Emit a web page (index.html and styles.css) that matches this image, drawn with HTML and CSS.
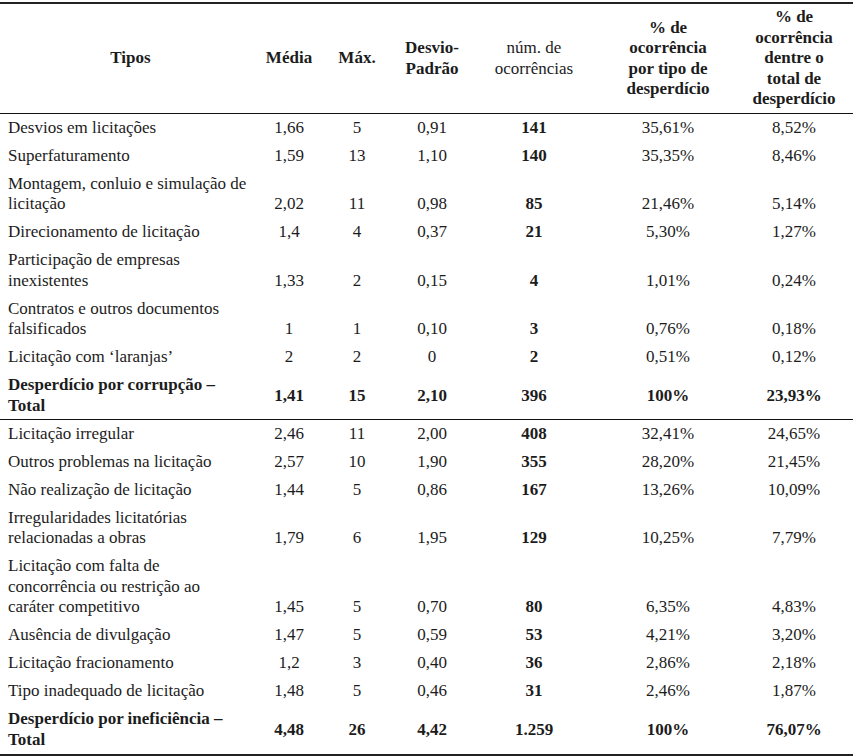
FILE: index.html
```html
<!DOCTYPE html>
<html lang="pt">
<head>
<meta charset="utf-8">
<title>Tipos de desperdício</title>
<link rel="stylesheet" href="styles.css">
</head>
<body>
<table class="tbl">
  <colgroup>
    <col class="c1"><col class="c2"><col class="c3"><col class="c4"><col class="c5"><col class="c6"><col class="c7">
  </colgroup>
  <thead>
    <tr>
      <th>Tipos</th>
      <th>Média</th>
      <th>Máx.</th>
      <th>Desvio-<br>Padrão</th>
      <th class="light">núm. de<br>ocorrências</th>
      <th>% de<br>ocorrência<br>por tipo de<br>desperdício</th>
      <th>% de<br>ocorrência<br>dentre o<br>total de<br>desperdício</th>
    </tr>
  </thead>
  <tbody class="first">
    <tr><td>Desvios em licitações</td><td>1,66</td><td>5</td><td>0,91</td><td class="b">141</td><td>35,61%</td><td>8,52%</td></tr>
    <tr><td>Superfaturamento</td><td>1,59</td><td>13</td><td>1,10</td><td class="b">140</td><td>35,35%</td><td>8,46%</td></tr>
    <tr><td>Montagem, conluio e simulação de<br>licitação</td><td>2,02</td><td>11</td><td>0,98</td><td class="b">85</td><td>21,46%</td><td>5,14%</td></tr>
    <tr><td>Direcionamento de licitação</td><td>1,4</td><td>4</td><td>0,37</td><td class="b">21</td><td>5,30%</td><td>1,27%</td></tr>
    <tr><td>Participação de empresas<br>inexistentes</td><td>1,33</td><td>2</td><td>0,15</td><td class="b">4</td><td>1,01%</td><td>0,24%</td></tr>
    <tr><td>Contratos e outros documentos<br>falsificados</td><td>1</td><td>1</td><td>0,10</td><td class="b">3</td><td>0,76%</td><td>0,18%</td></tr>
    <tr><td>Licitação com ‘laranjas’</td><td>2</td><td>2</td><td>0</td><td class="b">2</td><td>0,51%</td><td>0,12%</td></tr>
    <tr class="total"><td>Desperdício por corrupção –<br>Total</td><td>1,41</td><td>15</td><td>2,10</td><td>396</td><td>100%</td><td>23,93%</td></tr>
  </tbody>
  <tbody class="sec">
    <tr><td>Licitação irregular</td><td>2,46</td><td>11</td><td>2,00</td><td class="b">408</td><td>32,41%</td><td>24,65%</td></tr>
    <tr><td>Outros problemas na licitação</td><td>2,57</td><td>10</td><td>1,90</td><td class="b">355</td><td>28,20%</td><td>21,45%</td></tr>
    <tr><td>Não realização de licitação</td><td>1,44</td><td>5</td><td>0,86</td><td class="b">167</td><td>13,26%</td><td>10,09%</td></tr>
    <tr><td>Irregularidades licitatórias<br>relacionadas a obras</td><td>1,79</td><td>6</td><td>1,95</td><td class="b">129</td><td>10,25%</td><td>7,79%</td></tr>
    <tr><td>Licitação com falta de<br>concorrência ou restrição ao<br>caráter competitivo</td><td>1,45</td><td>5</td><td>0,70</td><td class="b">80</td><td>6,35%</td><td>4,83%</td></tr>
    <tr><td>Ausência de divulgação</td><td>1,47</td><td>5</td><td>0,59</td><td class="b">53</td><td>4,21%</td><td>3,20%</td></tr>
    <tr><td>Licitação fracionamento</td><td>1,2</td><td>3</td><td>0,40</td><td class="b">36</td><td>2,86%</td><td>2,18%</td></tr>
    <tr><td>Tipo inadequado de licitação</td><td>1,48</td><td>5</td><td>0,46</td><td class="b">31</td><td>2,46%</td><td>1,87%</td></tr>
    <tr class="total"><td>Desperdício por ineficiência –<br>Total</td><td>4,48</td><td>26</td><td>4,42</td><td>1.259</td><td>100%</td><td>76,07%</td></tr>
  </tbody>
</table>
</body>
</html>
```
FILE: styles.css
```css
html, body {
  margin: 0;
  padding: 0;
  background: #ffffff;
}

body {
  padding-top: 2px;
  font-family: "Liberation Serif", "Times New Roman", serif;
  font-size: 17px;
  line-height: 20.5px;
  color: #1c1c1c;
}

.tbl {
  width: 853px;
  table-layout: fixed;
  border-collapse: separate;
  border-spacing: 0;
  border-top: 2px solid #222;
  border-bottom: 2px solid #222;
}

.c1 { width: 261px; }
.c2 { width: 56px; }
.c3 { width: 80px; }
.c4 { width: 70px; }
.c5 { width: 134px; }
.c6 { width: 134px; }
.c7 { width: 118px; }

.tbl th {
  font-weight: bold;
  text-align: center;
  vertical-align: middle;
  padding: 3.25px 0;
  border-bottom: 1px solid #111;
  white-space: nowrap;
}

.tbl th.light {
  font-weight: normal;
}

.tbl td {
  text-align: center;
  vertical-align: bottom;
  padding: 3.75px 0;
  white-space: nowrap;
}

.tbl td:first-child {
  text-align: left;
  padding-left: 8px;
}

.tbl td.b {
  font-weight: bold;
}

.tbl tr.total td {
  font-weight: bold;
  vertical-align: middle;
}

.tbl tbody.first tr.total td {
  padding-bottom: 2.75px;
}

.tbl tbody.sec tr:first-child td {
  border-top: 1px solid #111;
}
```
